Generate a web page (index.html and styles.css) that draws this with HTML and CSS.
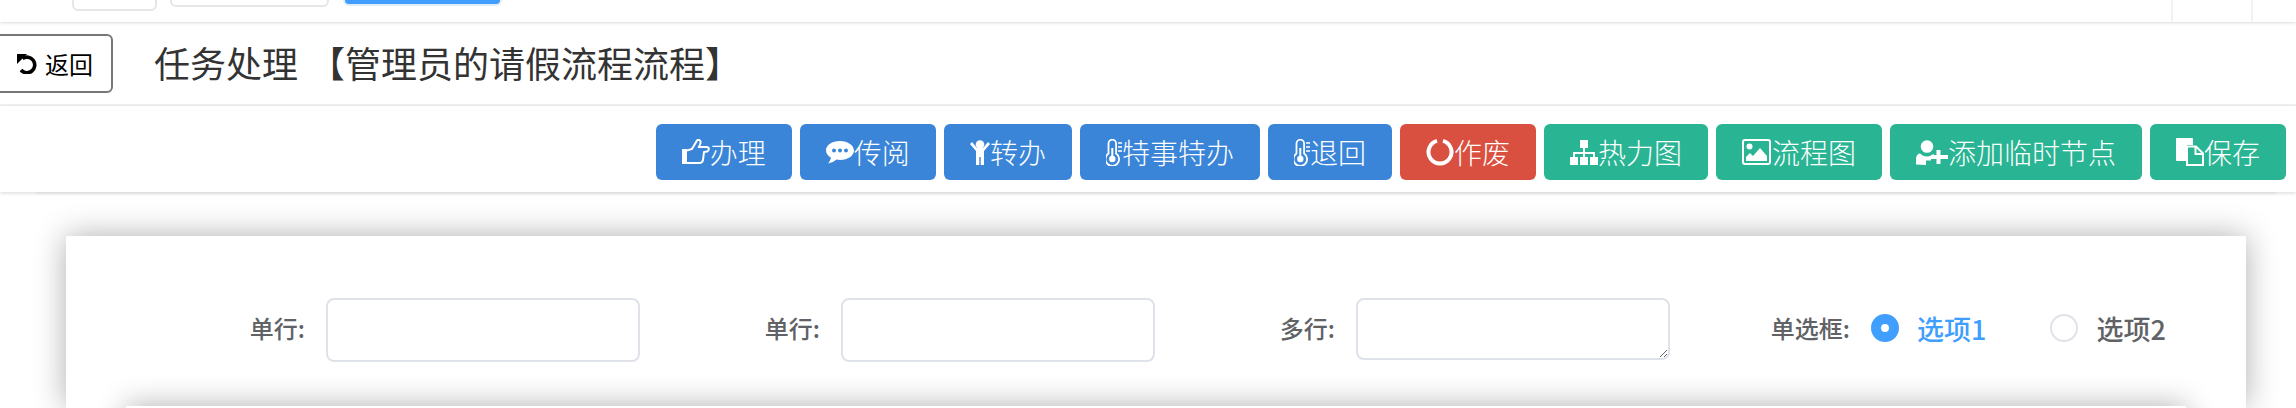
FILE: index.html
```html
<!DOCTYPE html>
<html lang="zh-CN">
<head>
  <meta charset="UTF-8">
  <title>任务处理</title>
  <link rel="stylesheet" href="styles.css">
</head>
<body>
  <!-- Top toolbar, scrolled mostly out of view -->
  <div class="top-bar">
    <span class="top-btn top-btn-small"></span>
    <span class="top-btn top-btn-wide"></span>
    <span class="top-btn top-btn-primary"></span>
    <span class="top-tab"></span>
  </div>

  <div class="title-row">
    <button class="back-btn">
      <svg class="back-icon" viewBox="0 0 20 21"><path d="M5.500 5.500A7.800 7.800 0 1 1 4 17" fill="none" stroke="#000" stroke-width="3.600"/><path d="M0 1L10 1L0 11Z" fill="#000"/></svg>
      返回
    </button>
    <h1 class="page-title">任务处理 【管理员的请假流程流程】</h1>
  </div>

  <div class="action-bar">
    <button class="btn btn-blue">
      <svg class="icon" width="28" height="26" viewBox="0 0 28 26"><path d="M0 10h5v15H0z" fill="#fff"/><path d="M5 11.500l5-1.500 5-8.500c2-1.500 4 0 3.500 2.500l-1.500 4h7.500c3 0 3 3.500 .5 4.500l-3 .5-1 8c-.5 2-1.500 3-3.500 3H5" fill="none" stroke="#fff" stroke-width="2"/></svg>办理
    </button>
    <button class="btn btn-blue">
      <svg class="icon" width="28" height="23" viewBox="0 0 28 23"><path d="M14 0C6 0 0 4 0 9.500c0 3 2 5.500 5 7.200-.5 2.300-1.500 4-3 5.800 3.500-.5 6.500-2 8.500-3.900 1 .2 2.300 .4 3.500 .4 8 0 14-4.500 14-9.500S22 0 14 0z" fill="#fff"/><circle cx="8" cy="9.500" r="2" fill="#3a85d8"/><circle cx="14" cy="9.500" r="2" fill="#3a85d8"/><circle cx="20" cy="9.500" r="2" fill="#3a85d8"/></svg>传阅
    </button>
    <button class="btn btn-blue">
      <svg class="icon" width="20" height="25" viewBox="0 0 20 25"><circle cx="10" cy="4.500" r="4.300" fill="#fff"/><path d="M0 4l2-2 5 6h6l5-6 2 2-6 7v14h-3.300v-8h-1.400v8H6V11z" fill="#fff"/></svg>转办
    </button>
    <button class="btn btn-blue">
      <svg class="icon" width="16" height="27" viewBox="0 0 16 27"><path d="M2.500 14.500V4.500a3.800 3.800 0 0 1 7.600 0v10a6.800 6.800 0 1 1-7.600 0z" fill="none" stroke="#fff" stroke-width="1.800"/><circle cx="6.300" cy="20" r="3.200" fill="#fff"/><path d="M6.300 9v9" stroke="#fff" stroke-width="2"/><path d="M12 4h4M12 8h4M12 12h4" stroke="#fff" stroke-width="1.600"/></svg>特事特办
    </button>
    <button class="btn btn-blue">
      <svg class="icon" width="16" height="27" viewBox="0 0 16 27"><path d="M2.500 14.500V4.500a3.800 3.800 0 0 1 7.600 0v10a6.800 6.800 0 1 1-7.600 0z" fill="none" stroke="#fff" stroke-width="1.800"/><circle cx="6.300" cy="20" r="3.200" fill="#fff"/><path d="M6.300 9v9" stroke="#fff" stroke-width="2"/><path d="M12 4h4M12 8h4M12 12h4" stroke="#fff" stroke-width="1.600"/></svg>退回
    </button>
    <button class="btn btn-red">
      <svg class="icon" width="28" height="28" viewBox="0 0 28 28"><path d="M11 2.900a11.500 11.500 0 1 0 6 0" fill="none" stroke="#fff" stroke-width="4"/></svg>作废
    </button>
    <button class="btn btn-green">
      <svg class="icon" width="28" height="25" viewBox="0 0 28 25"><path d="M10 0h8v8h-8zM0 17h8v8H0zM10 17h8v8h-8zM20 17h8v8h-8z" fill="#fff"/><path d="M14 8v9M4 17v-4h20v4" fill="none" stroke="#fff" stroke-width="2"/></svg>热力图
    </button>
    <button class="btn btn-green">
      <svg class="icon" width="30" height="26" viewBox="0 0 30 26"><rect x="1" y="1" width="27" height="24" rx="2" fill="none" stroke="#fff" stroke-width="2"/><circle cx="7.500" cy="7.500" r="3" fill="#fff"/><path d="M4 22v-4l4-4 3 3 7-8 7 8v5z" fill="#fff"/></svg>流程图
    </button>
    <button class="btn btn-green">
      <svg class="icon" width="32" height="25" viewBox="0 0 32 25"><circle cx="11" cy="6.500" r="6.300" fill="#fff"/><path d="M0 24.500v-6c0-3 2-5 4-5 2 2 4.500 3 7 3s5-1 6-2.500l2 1.500h-4v5h-5v4.500z" fill="#fff"/><path d="M22.500 10v14M15 17h17" stroke="#fff" stroke-width="4"/></svg>添加临时节点
    </button>
    <button class="btn btn-green">
      <svg class="icon" width="28" height="28" viewBox="0 0 28 28"><path d="M1 0h15a1 1 0 0 1 1 1v6h-6v16H1a1 1 0 0 1-1-1V1a1 1 0 0 1 1-1z" fill="#fff"/><path d="M11 8.500h9l7 7V27H11z" fill="none" stroke="#fff" stroke-width="2"/><path d="M19.500 9v7h7" fill="none" stroke="#fff" stroke-width="2"/></svg>保存
    </button>
  </div>

  <div class="content">
    <div class="form-card">
      <form class="form-row">
        <div class="form-item">
          <label class="form-label">单行:</label>
          <input class="form-input" type="text">
        </div>
        <div class="form-item">
          <label class="form-label">单行:</label>
          <input class="form-input" type="text">
        </div>
        <div class="form-item">
          <label class="form-label">多行:</label>
          <textarea class="form-textarea"></textarea>
        </div>
        <div class="form-item">
          <label class="form-label">单选框:</label>
          <div class="radio-group">
            <span class="radio radio-checked"><span class="radio-dot"></span><span class="radio-text">选项1</span></span>
            <span class="radio"><span class="radio-dot"></span><span class="radio-text">选项2</span></span>
          </div>
        </div>
      </form>
      <div class="inner-card"></div>
    </div>
  </div>
</body>
</html>
```

FILE: styles.css
```css
html, body {
  height: 408px;
  overflow: hidden;
}

body {
  margin: 0;
  background-color: #fff;
  color: #333;
  font-family: "Noto Sans CJK SC", "Liberation Sans", sans-serif;
}

/* Top toolbar */
.top-bar {
  position: relative;
  z-index: 3;
  display: flex;
  align-items: flex-end;
  height: 22px;
  overflow: hidden;
  background-color: #fff;
  box-shadow: 0 1px 3px rgba(0, 0, 0, 0.15);
}

.top-btn {
  flex: none;
  height: 40px;
  box-sizing: border-box;
  border: 2px solid #e6e6e6;
  border-radius: 6px;
  margin-bottom: 16px;
}

.top-btn-small {
  width: 85px;
  margin-left: 72px;
  margin-bottom: 11px;
}

.top-btn-wide {
  width: 159px;
  margin-left: 13px;
  margin-bottom: 15px;
}

.top-btn-primary {
  width: 159px;
  margin-left: 14px;
  background-color: #409eff;
  border-color: #e0ecf8;
}

.top-tab {
  flex: none;
  width: 78px;
  height: 22px;
  margin-left: 1669px;
  border-left: 2px solid #f2f2f2;
  border-right: 2px solid #f2f2f2;
  box-sizing: content-box;
}

/* Title row */
.title-row {
  display: flex;
  align-items: center;
  height: 82px;
  background-color: #fff;
  border-bottom: 2px solid #f3f3f3;
}

.back-btn {
  display: flex;
  flex: none;
  align-items: center;
  gap: 8px;
  width: 133px;
  height: 59px;
  margin-left: -20px;
  padding: 0 0 0 35px;
  box-sizing: border-box;
  background-color: #fff;
  border: 2px solid #777;
  border-radius: 6px;
  color: #000;
  font-family: inherit;
  font-size: 24px;
}

.back-icon {
  width: 20px;
  height: 21px;
}

.page-title {
  margin: 0 0 2px 41px;
  color: #333;
  font-size: 36px;
  font-weight: 400;
  white-space: nowrap;
  word-spacing: 3px;
}

/* Action buttons */
.action-bar {
  position: relative;
  z-index: 2;
  display: flex;
  justify-content: flex-end;
  gap: 8px;
  height: 56px;
  padding: 18px 10px 12px;
  background-color: #fff;
  box-shadow: 0 1px 4px rgba(0, 0, 0, 0.16);
}

.btn {
  display: flex;
  flex: none;
  align-items: center;
  height: 56px;
  padding: 0 26px;
  border: none;
  border-radius: 6px;
  color: #fff;
  font-family: inherit;
  font-size: 28px;
  font-weight: 300;
}

.icon {
  flex: none;
}

.btn-blue {
  background-color: #3a85d8;
}

.btn-red {
  background-color: #da5040;
}

.btn-green {
  background-color: #29b493;
}

/* Form area */
.content {
  height: 216px;
  box-sizing: border-box;
  margin: 0 20px 0 36px;
  padding: 41px 30px 0;
  border-top: 3px solid #f7f7f7;
}

.form-card {
  height: 172px;
  box-sizing: border-box;
  overflow: hidden;
  padding: 62px 60px 0;
  background-color: #fff;
  box-shadow: 0 0 30px rgba(0, 0, 0, 0.32);
}

.form-row {
  display: grid;
  grid-template-columns: repeat(4, 515px);
  margin: 0;
}

.form-item {
  display: flex;
  align-items: flex-start;
}

.form-label {
  flex: none;
  width: 179px;
  padding-right: 21px;
  color: #606266;
  font-size: 24px;
  font-weight: 500;
  line-height: 60px;
  text-align: right;
}

.form-input,
.form-textarea {
  flex: none;
  width: 314px;
  margin: 0;
  box-sizing: border-box;
  background-color: #fff;
  border: 2px solid #dfe2e9;
  border-radius: 8px;
  outline: none;
}

.form-input {
  height: 64px;
}

.form-textarea {
  height: 62px;
}

.radio-group {
  display: flex;
  gap: 64px;
  height: 60px;
}

.radio {
  display: flex;
  align-items: center;
  gap: 18px;
  color: #606266;
  font-size: 27px;
  font-weight: 500;
}

.radio-dot {
  flex: none;
  width: 28px;
  height: 28px;
  box-sizing: border-box;
  background-color: #fff;
  border: 2px solid #dfe2e9;
  border-radius: 50%;
}

.radio-checked {
  color: #409eff;
}

.radio-checked .radio-dot {
  border: 10px solid #409eff;
}

/* Second card, only its top edge is in view */
.inner-card {
  height: 60px;
  margin-top: 44px;
  background-color: #fff;
  box-shadow: 0 0 30px rgba(0, 0, 0, 0.32);
}
```
